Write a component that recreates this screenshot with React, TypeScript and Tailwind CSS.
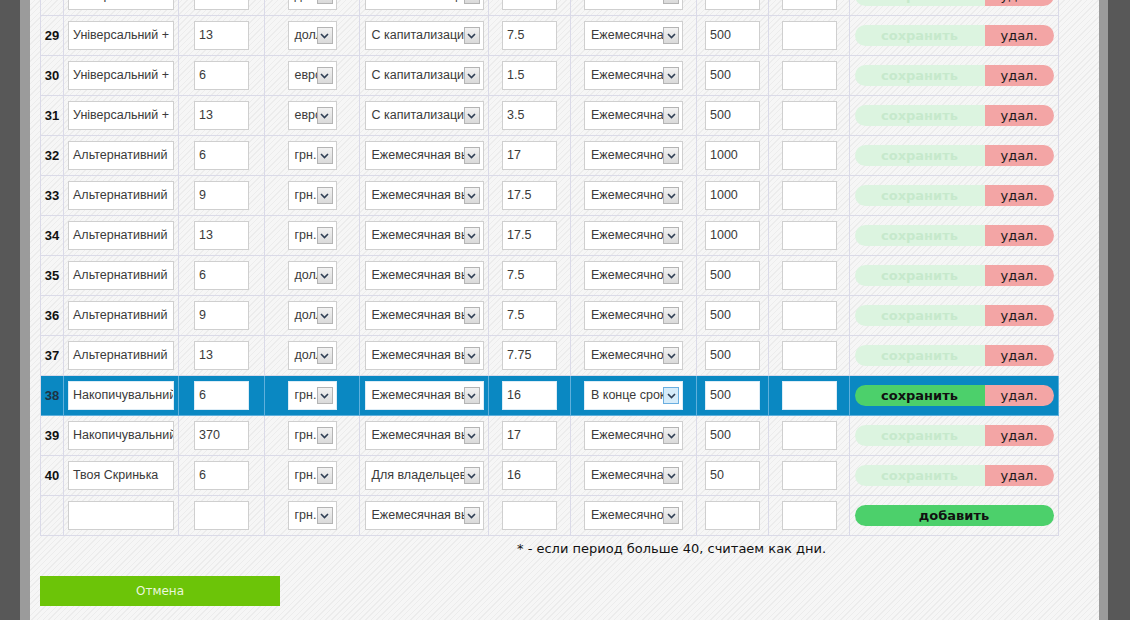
import React from 'react'

type Row = {
  n: number | null
  name: string
  term: string
  cur: string
  kind: string
  rate: string
  pay: string
  min: string
  active?: boolean
}

const rows: Row[] = [
  { n: 28, name: 'Універсальний +', term: '6', cur: 'доллар', kind: 'С капитализацией', rate: '5.5', pay: 'Ежемесячная', min: '500' },
  { n: 29, name: 'Універсальний +', term: '13', cur: 'доллар', kind: 'С капитализацией', rate: '7.5', pay: 'Ежемесячная', min: '500' },
  { n: 30, name: 'Універсальний +', term: '6', cur: 'евро', kind: 'С капитализацией', rate: '1.5', pay: 'Ежемесячная', min: '500' },
  { n: 31, name: 'Універсальний +', term: '13', cur: 'евро', kind: 'С капитализацией', rate: '3.5', pay: 'Ежемесячная', min: '500' },
  { n: 32, name: 'Альтернативний', term: '6', cur: 'грн.', kind: 'Ежемесячная выплата', rate: '17', pay: 'Ежемесячно', min: '1000' },
  { n: 33, name: 'Альтернативний', term: '9', cur: 'грн.', kind: 'Ежемесячная выплата', rate: '17.5', pay: 'Ежемесячно', min: '1000' },
  { n: 34, name: 'Альтернативний', term: '13', cur: 'грн.', kind: 'Ежемесячная выплата', rate: '17.5', pay: 'Ежемесячно', min: '1000' },
  { n: 35, name: 'Альтернативний', term: '6', cur: 'доллар', kind: 'Ежемесячная выплата', rate: '7.5', pay: 'Ежемесячно', min: '500' },
  { n: 36, name: 'Альтернативний', term: '9', cur: 'доллар', kind: 'Ежемесячная выплата', rate: '7.5', pay: 'Ежемесячно', min: '500' },
  { n: 37, name: 'Альтернативний', term: '13', cur: 'доллар', kind: 'Ежемесячная выплата', rate: '7.75', pay: 'Ежемесячно', min: '500' },
  { n: 38, name: 'Накопичувальний', term: '6', cur: 'грн.', kind: 'Ежемесячная выплата', rate: '16', pay: 'В конце срока', min: '500', active: true },
  { n: 39, name: 'Накопичувальний', term: '370', cur: 'грн.', kind: 'Ежемесячная выплата', rate: '17', pay: 'Ежемесячно', min: '500' },
  { n: 40, name: 'Твоя Скринька', term: '6', cur: 'грн.', kind: 'Для владельцев', rate: '16', pay: 'Ежемесячная', min: '50' },
]

const newRow: Row = { n: null, name: '', term: '', cur: 'грн.', kind: 'Ежемесячная выплата', rate: '', pay: 'Ежемесячно', min: '' }

function TextBox({ value, w, active }: { value: string; w: string; active?: boolean }) {
  return (
    <div
      className={`flex h-[29px] ${w} items-center overflow-hidden whitespace-nowrap border bg-white px-[4px] text-[12.5px] text-[#3a3a3a] ${
        active ? 'border-[#dcecf6]' : 'border-[#cfcfcf]'
      }`}
    >
      {value}
    </div>
  )
}

function Chevron() {
  return (
    <svg width="9" height="6" viewBox="0 0 9 6" fill="none">
      <path d="M1 1 L4.5 4.5 L8 1" stroke="#2f3f55" strokeWidth="1.6" />
    </svg>
  )
}

function SelectBox({ value, w, active, focused }: { value: string; w: string; active?: boolean; focused?: boolean }) {
  return (
    <div
      className={`flex h-[29px] ${w} items-center border bg-white text-[12.5px] text-[#3a3a3a] ${
        active ? 'border-[#dcecf6]' : 'border-[#cfcfcf]'
      }`}
    >
      <span className="min-w-0 flex-1 overflow-hidden whitespace-nowrap pl-[6px] text-left">{value}</span>
      <span
        className={`mr-[3px] flex h-[17px] w-[16px] shrink-0 items-center justify-center border ${
          focused ? 'border-[#6aaee0] bg-[#d6ecfa]' : 'border-[#b4b4b4] bg-gradient-to-b from-[#f2f2f2] to-[#dadada]'
        }`}
      >
        <Chevron />
      </span>
    </div>
  )
}

function Actions({ active }: { active?: boolean }) {
  return (
    <div className="flex h-[21px] w-[199px] overflow-hidden rounded-full font-['DejaVu_Sans',Verdana,sans-serif] text-[13px]">
      <div
        className={`flex w-[130px] items-center justify-center font-bold ${
          active ? 'bg-[#4cd06b] text-[#111]' : 'bg-[#dcf4e0] text-[#c6e9cc]'
        }`}
      >
        сохранить
      </div>
      <div className="flex flex-1 items-center justify-center bg-[#f3a5a5] text-[#1a1a1a]">удал.</div>
    </div>
  )
}

function TableRow({ row, isNew }: { row: Row; isNew?: boolean }) {
  const a = row.active
  const cell = `flex items-center justify-center border-r border-b ${a ? 'border-[#5fb0dc]' : 'border-[#dadae8]'}`
  return (
    <div
      className={`grid h-[40px] grid-cols-[23px_115px_86px_95px_129px_82px_126px_72px_81px_209px] ${
        a ? 'bg-[#0a88c2]' : ''
      }`}
    >
      <div className={`${cell} text-[13px] font-bold ${a ? 'text-[#1d3344]' : 'text-[#111]'}`}>{row.n ?? ''}</div>
      <div className={cell}>
        <TextBox value={row.name} w="w-[106px]" active={a} />
      </div>
      <div className={cell}>
        <TextBox value={row.term} w="w-[55px]" active={a} />
      </div>
      <div className={cell}>
        <SelectBox value={row.cur} w="w-[49px]" active={a} />
      </div>
      <div className={cell}>
        <SelectBox value={row.kind} w="w-[119px]" active={a} />
      </div>
      <div className={cell}>
        <TextBox value={row.rate} w="w-[55px]" active={a} />
      </div>
      <div className={cell}>
        <SelectBox value={row.pay} w="w-[99px]" active={a} focused={a} />
      </div>
      <div className={cell}>
        <TextBox value={row.min} w="w-[55px]" active={a} />
      </div>
      <div className={cell}>
        <TextBox value="" w="w-[55px]" active={a} />
      </div>
      <div className={cell}>
        {isNew ? (
          <div className="flex h-[21px] w-[199px] items-center justify-center rounded-full bg-[#4cd06b] font-['DejaVu_Sans',Verdana,sans-serif] text-[13px] font-bold text-[#111]">
            добавить
          </div>
        ) : (
          <Actions active={a} />
        )}
      </div>
    </div>
  )
}

export default function App() {
  return (
    <div className="flex h-[620px] w-[1130px] overflow-hidden bg-[#585858] font-['Liberation_Sans',Arial,sans-serif]">
      <div className="w-[20px] shrink-0 bg-[#585858]" />
      <div className="w-[10px] shrink-0 bg-[#9b9b9b]" />
      <main className="flex-1 bg-[#f4f4f4] bg-[image:repeating-linear-gradient(135deg,#f6f6f6_0px,#f6f6f6_3px,#ececec_3px,#ececec_4px)] pl-[10px]">
        <div className="mt-[-25px] w-[1019px] border-l border-t border-[#dadae8]">
          {rows.map((r) => (
            <TableRow key={r.n} row={r} />
          ))}
          <TableRow row={newRow} isNew />
        </div>
        <p className="ml-[477px] mt-[5px] font-['DejaVu_Sans',Verdana,sans-serif] text-[13px] leading-[16px] text-[#111]">
          * - если период больше 40, считаем как дни.
        </p>
        <button
          type="button"
          className="mt-[19px] flex h-[30px] w-[240px] items-center justify-center bg-[#6cc408] font-['DejaVu_Sans',Verdana,sans-serif] text-[12px] text-[#eaf7dc]"
        >
          Отмена
        </button>
      </main>
      <div className="w-[9px] shrink-0 bg-[#9b9b9b]" />
      <div className="w-[22px] shrink-0 bg-[#585858]" />
    </div>
  )
}
